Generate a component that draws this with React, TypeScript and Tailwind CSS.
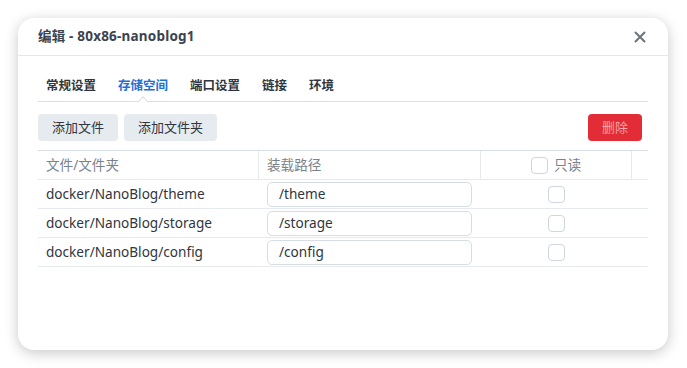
import React from "react";

const tabs = ["常规设置", "存储空间", "端口设置", "链接", "环境"];

const rows = [
  { file: "docker/NanoBlog/theme", path: "/theme" },
  { file: "docker/NanoBlog/storage", path: "/storage" },
  { file: "docker/NanoBlog/config", path: "/config" },
];

function Box() {
  return <span className="block w-[17px] h-[17px] rounded-[4px] border border-[#cfd6de] bg-white" />;
}

export default function App() {
  return (
    <div
      className="w-[687px] h-[368px] bg-white pt-[18px] pl-[18px]"
      style={{ fontFamily: '"Noto Sans", "Noto Sans CJK SC", sans-serif' }}
    >
      <div className="w-[650px] h-[332px] bg-white rounded-[16px] shadow-[0_3px_14px_rgba(0,0,0,0.22)] flex flex-col">
        {/* Header */}
        <div className="h-[38px] shrink-0 flex items-center justify-between border-b border-[#e3e8ee] pl-[20px] pr-[22px]">
          <span className="text-[13.5px] font-bold text-[#3a4350] tracking-[0.2px]">编辑 - 80x86-nanoblog1</span>
          <svg width="12" height="12" viewBox="0 0 12 12" className="text-[#6b737d]">
            <path d="M1.5 1.5 L10.5 10.5 M10.5 1.5 L1.5 10.5" stroke="currentColor" strokeWidth="2" strokeLinecap="round" />
          </svg>
        </div>

        <div className="px-[20px]">
          {/* Tabs */}
          <div className="relative h-[46px] border-b border-[#d9dfe6] flex items-end pb-[6px] pl-[8px] gap-[22px]">
            {tabs.map((t, i) => (
              <span
                key={t}
                className={`relative text-[12.5px] font-semibold leading-[18px] ${i === 1 ? "text-[#1f6fd6]" : "text-[#2f3640]"}`}
              >
                {t}
                {i === 1 && (
                  <span className="absolute left-1/2 -translate-x-1/2 -bottom-[11px] w-[8px] h-[8px] rotate-45 bg-white border-t border-l border-[#d9dfe6]" />
                )}
              </span>
            ))}
          </div>

          {/* Toolbar */}
          <div className="flex items-center justify-between mt-[12px] h-[27px]">
            <div className="flex gap-[6px]">
              <button className="h-[27px] px-[14px] rounded-[4px] bg-[#e6ebf0] text-[13px] text-[#2f3640]">添加文件</button>
              <button className="h-[27px] px-[14px] rounded-[4px] bg-[#e6ebf0] text-[13px] text-[#2f3640]">添加文件夹</button>
            </div>
            <button className="h-[27px] w-[54px] mr-[6px] rounded-[4px] bg-[#e22d37] text-[13px] text-[#f6a2a8]">删除</button>
          </div>

          {/* Table */}
          <div className="mt-[9px] border-t border-[#d9dfe6] text-[13.6px]">
            <div className="grid grid-cols-[221px_222px_151px_16px] h-[29px] border-b border-[#e6eaef] text-[#7a828c]">
              <div className="flex items-center pl-[8px] border-r border-[#e6eaef]">文件/文件夹</div>
              <div className="flex items-center pl-[8px] border-r border-[#e6eaef]">装载路径</div>
              <div className="flex items-center justify-center gap-[6px] border-r border-[#e6eaef]">
                <Box />
                <span>只读</span>
              </div>
              <div />
            </div>
            {rows.map((r) => (
              <div key={r.file} className="grid grid-cols-[221px_222px_151px_16px] h-[29px] border-b border-[#e6eaef] text-[#2f3640]">
                <div className="flex items-center pl-[8px]">{r.file}</div>
                <div className="flex items-center pl-[8px]">
                  <div className="w-[205px] h-[25px] rounded-[5px] border border-[#d6dde5] flex items-center pl-[11px]">{r.path}</div>
                </div>
                <div className="flex items-center justify-center">
                  <Box />
                </div>
                <div />
              </div>
            ))}
          </div>
        </div>
      </div>
    </div>
  );
}
